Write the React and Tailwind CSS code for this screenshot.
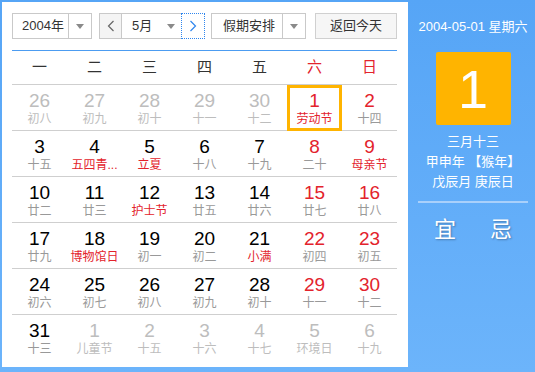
const WEEK = ['一', '二', '三', '四', '五', '六', '日']

// [day, lunar, kind] kind: o = other month, f = festival
const ROWS = [
  [[26, '初八', 'o'], [27, '初九', 'o'], [28, '初十', 'o'], [29, '十一', 'o'], [30, '十二', 'o'], [1, '劳动节', 'f'], [2, '十四']],
  [[3, '十五'], [4, '五四青...', 'f'], [5, '立夏', 'f'], [6, '十八'], [7, '十九'], [8, '二十'], [9, '母亲节', 'f']],
  [[10, '廿二'], [11, '廿三'], [12, '护士节', 'f'], [13, '廿五'], [14, '廿六'], [15, '廿七'], [16, '廿八']],
  [[17, '廿九'], [18, '博物馆日', 'f'], [19, '初一'], [20, '初二'], [21, '小满', 'f'], [22, '初四'], [23, '初五']],
  [[24, '初六'], [25, '初七'], [26, '初八'], [27, '初九'], [28, '初十'], [29, '十一'], [30, '十二']],
  [[31, '十三'], [1, '儿童节', 'o'], [2, '十五', 'o'], [3, '十六', 'o'], [4, '十七', 'o'], [5, '环境日', 'o'], [6, '十九', 'o']],
]

function Caret() {
  return <span className="w-0 h-0 border-l-[4px] border-r-[4px] border-t-[5px] border-l-transparent border-r-transparent border-t-[#8a8a8a]" />
}

function Chevron({ dir, color }) {
  return (
    <svg width="8" height="12" viewBox="0 0 8 12">
      <polyline
        points={dir === 'left' ? '6.5,1 1.5,6 6.5,11' : '1.5,1 6.5,6 1.5,11'}
        fill="none"
        stroke={color}
        strokeWidth="1.2"
      />
    </svg>
  )
}

function Cell({ day, lunar, kind, col, today }) {
  const other = kind === 'o'
  const weekend = col >= 5
  const numColor = other ? 'text-[#bdbdbd]' : weekend ? 'text-[#e3232c]' : 'text-black'
  const lunarColor = other ? 'text-[#bdbdbd]' : kind === 'f' ? 'text-[#e3232c]' : 'text-[#999]'
  return (
    <div className="relative flex flex-col items-center pt-[6px] h-[45px]">
      <span className={`text-[19px] leading-[20px] ${numColor}`}>{day}</span>
      <span className={`text-[12px] leading-[15px] mt-[1px] whitespace-nowrap ${lunarColor}`}>{lunar}</span>
      {today && <div className="absolute left-0 right-0 top-0 -bottom-[1px] border-[3px] border-[#ffb400]" />}
    </div>
  )
}

export default function App() {
  return (
    <div
      className="w-[535px] h-[372px] flex bg-gradient-to-b from-[#56a5f6] to-[#6cb4fb] text-[#333]"
      style={{ fontFamily: '"Liberation Sans", "Noto Sans CJK SC", sans-serif' }}
    >
      <div className="ml-[2px] mt-[2px] w-[406px] h-[365px] bg-white pl-[10px] pr-[11px] pt-[11px]">
        <div className="flex items-center h-[26px] text-[13px]">
          <div className="flex w-[80px] h-[26px] border border-[#c9c9c9] bg-white">
            <div className="w-[55px] flex items-center pl-[9px]">2004年</div>
            <div className="flex-1 border-l border-[#c9c9c9] flex items-center justify-center">
              <Caret />
            </div>
          </div>
          <div className="flex ml-[7px] w-[106px] h-[26px] border border-[#c9c9c9]">
            <div className="w-[22px] bg-[#f4f4f4] border-r border-[#c9c9c9] flex items-center justify-center">
              <Chevron dir="left" color="#666" />
            </div>
            <div className="flex-1 flex items-center pl-[10px] pr-[6px] bg-white">
              <span>5月</span>
              <span className="ml-auto flex"><Caret /></span>
            </div>
            <div className="w-[24px] -my-[1px] -mr-[1px] border border-dotted border-[#2f86ee] bg-white flex items-center justify-center">
              <Chevron dir="right" color="#2f86ee" />
            </div>
          </div>
          <div className="flex ml-[6px] w-[95px] h-[26px] border border-[#c9c9c9] bg-white">
            <div className="w-[70px] flex items-center pl-[11px]">假期安排</div>
            <div className="flex-1 border-l border-[#c9c9c9] flex items-center justify-center">
              <Caret />
            </div>
          </div>
          <div className="ml-[9px] w-[82px] h-[26px] border border-[#d0d0d0] bg-[#f6f6f6] flex items-center justify-center">
            返回今天
          </div>
        </div>

        <div className="mt-[11px] border-t border-[#4c9cf1]">
          <div className="grid grid-cols-7 h-[34px] border-b border-[#cfcfcf] text-[15px]">
            {WEEK.map((w, i) => (
              <div key={w} className={`flex items-center justify-center ${i >= 5 ? 'text-[#e3232c]' : 'text-[#333]'}`}>
                {w}
              </div>
            ))}
          </div>
          {ROWS.map((row, r) => (
            <div key={r} className={`grid grid-cols-7 ${r < ROWS.length - 1 ? 'border-b border-[#cfcfcf]' : ''}`}>
              {row.map(([day, lunar, kind], c) => (
                <Cell key={c} day={day} lunar={lunar} kind={kind} col={c} today={r === 0 && c === 5} />
              ))}
            </div>
          ))}
        </div>
      </div>

      <div className="flex-1 flex flex-col items-center text-white pl-[3px]">
        <div className="mt-[18px] text-[13px] leading-[18px] whitespace-nowrap">2004-05-01 星期六</div>
        <div className="mt-[16px] w-[75px] h-[73px] rounded-[2px] bg-[#ffb400] flex items-center justify-center text-[54px] leading-none">
          1
        </div>
        <div className="mt-[7px] flex flex-col items-center text-[13px] leading-[20px] whitespace-nowrap">
          <span>三月十三</span>
          <span>甲申年 【猴年】</span>
          <span>戊辰月 庚辰日</span>
        </div>
        <div className="mt-[9px] w-[110px] h-[2px] bg-[#a9d0fb]" />
        <div className="mt-[15px] flex gap-[34px] text-[22px] leading-[24px] [text-shadow:1px_1px_2px_rgba(0,0,0,0.3)]">
          <span>宜</span>
          <span>忌</span>
        </div>
      </div>
    </div>
  )
}
